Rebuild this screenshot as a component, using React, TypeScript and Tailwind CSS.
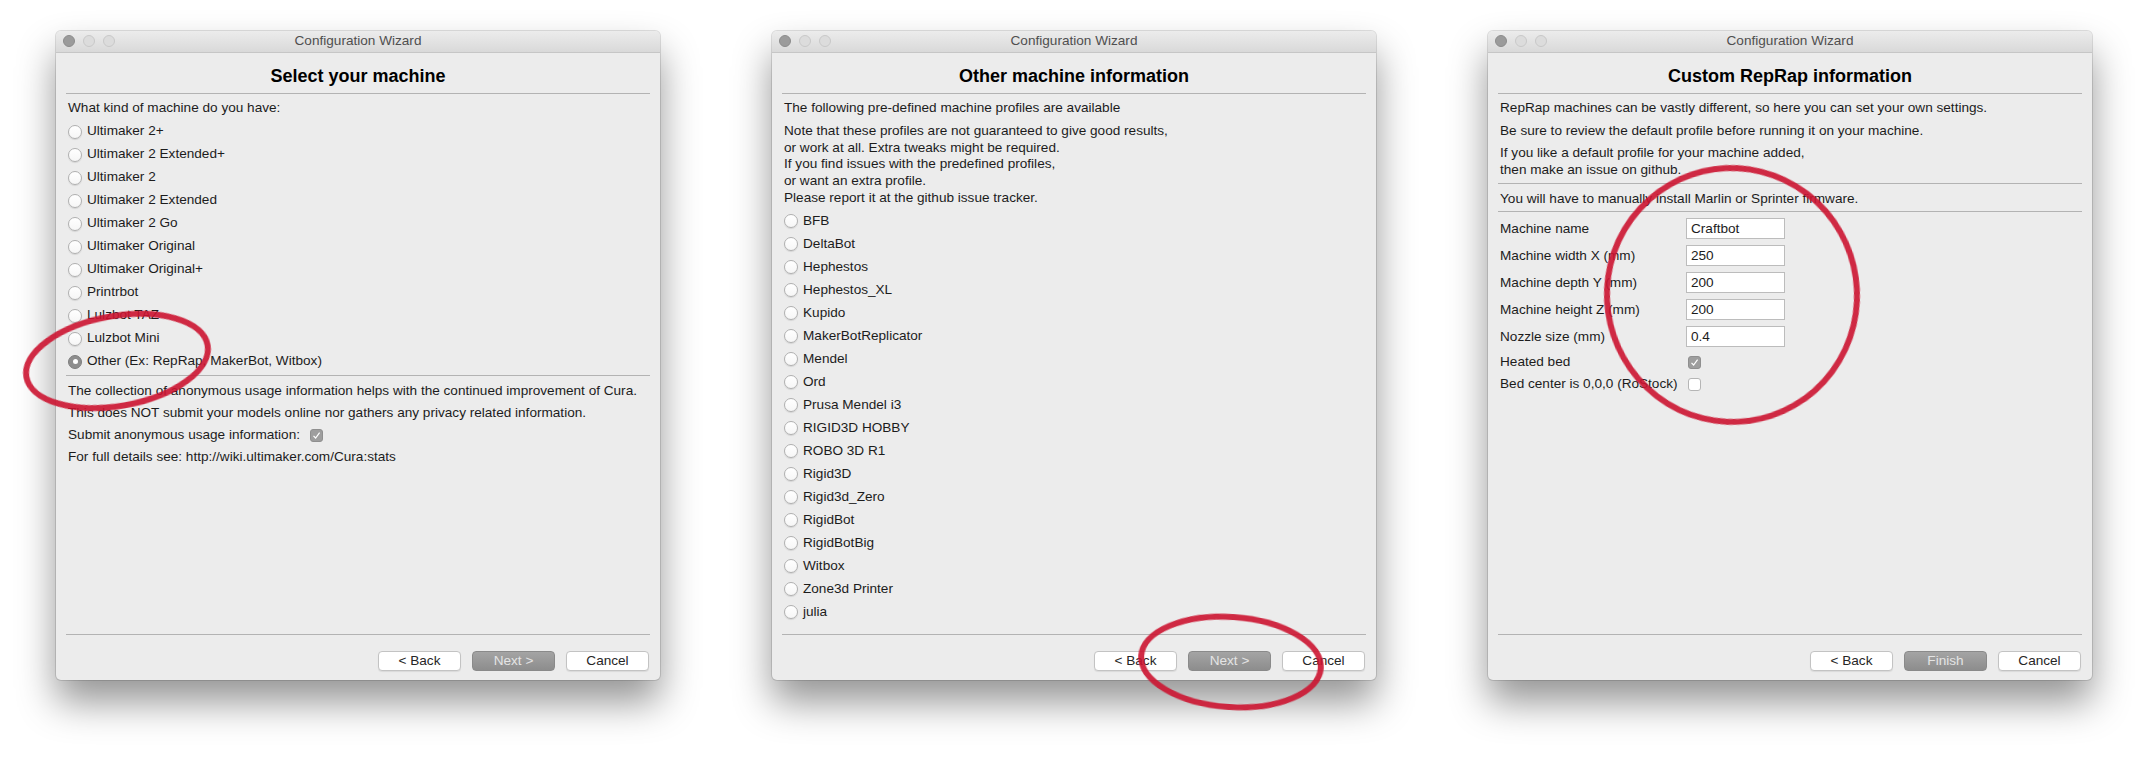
import React from "react";

const machines = [
  "Ultimaker 2+",
  "Ultimaker 2 Extended+",
  "Ultimaker 2",
  "Ultimaker 2 Extended",
  "Ultimaker 2 Go",
  "Ultimaker Original",
  "Ultimaker Original+",
  "Printrbot",
  "Lulzbot TAZ",
  "Lulzbot Mini",
  "Other (Ex: RepRap, MakerBot, Witbox)",
];

const profiles = [
  "BFB",
  "DeltaBot",
  "Hephestos",
  "Hephestos_XL",
  "Kupido",
  "MakerBotReplicator",
  "Mendel",
  "Ord",
  "Prusa Mendel i3",
  "RIGID3D HOBBY",
  "ROBO 3D R1",
  "Rigid3D",
  "Rigid3d_Zero",
  "RigidBot",
  "RigidBotBig",
  "Witbox",
  "Zone3d Printer",
  "julia",
];

const fields = [
  ["Machine name", "Craftbot"],
  ["Machine width X (mm)", "250"],
  ["Machine depth Y (mm)", "200"],
  ["Machine height Z (mm)", "200"],
  ["Nozzle size (mm)", "0.4"],
];

function Radio({ checked = false }: { checked?: boolean }) {
  if (checked) {
    return (
      <span className="w-[14px] h-[14px] rounded-full bg-[#8e8e8e] border border-[#7e7e7e] flex items-center justify-center flex-shrink-0">
        <span className="w-[5px] h-[5px] rounded-full bg-white" />
      </span>
    );
  }
  return (
    <span className="w-[14px] h-[14px] rounded-full bg-gradient-to-b from-white to-[#f6f6f6] border border-[#b0b0b0] shadow-[0_1px_1px_rgba(0,0,0,0.1)] flex-shrink-0" />
  );
}

function Checkbox({ checked = false }: { checked?: boolean }) {
  if (checked) {
    return (
      <span className="w-[13px] h-[13px] rounded-[3px] bg-[#9e9e9e] border border-[#8f8f8f] flex items-center justify-center flex-shrink-0">
        <svg width="9" height="9" viewBox="0 0 9 9">
          <path d="M1.5 4.8 L3.6 7 L7.6 1.6" fill="none" stroke="#fff" strokeWidth="1.2" />
        </svg>
      </span>
    );
  }
  return (
    <span className="w-[13px] h-[13px] rounded-[3px] bg-white border border-[#b5b5b5] flex-shrink-0" />
  );
}

function Separator() {
  return <div className="mx-[10px] h-px bg-[#b3b3b3]" />;
}

function Row({ children, h = "h-[23px]" }: { children: React.ReactNode; h?: string }) {
  return <div className={`${h} flex items-center px-[12px] whitespace-nowrap`}>{children}</div>;
}

function RadioRow({ label, checked = false }: { label: string; checked?: boolean }) {
  return (
    <div className="h-[23px] flex items-center gap-[5px] px-[12px]">
      <Radio checked={checked} />
      <span>{label}</span>
    </div>
  );
}

function Button({ label, primary = false }: { label: string; primary?: boolean }) {
  if (primary) {
    return (
      <div className="w-[83px] h-[20px] rounded-[4px] bg-gradient-to-b from-[#a4a4a4] to-[#8d8d8d] border border-[#8a8a8a] flex items-center justify-center text-[#e4e4e4]">
        {label}
      </div>
    );
  }
  return (
    <div className="w-[83px] h-[20px] rounded-[4px] bg-white border border-[#c3c3c3] shadow-[0_1px_1px_rgba(0,0,0,0.08)] flex items-center justify-center text-[#262626]">
      {label}
    </div>
  );
}

function Window({
  heading,
  finish = false,
  children,
}: {
  heading: string;
  finish?: boolean;
  children: React.ReactNode;
}) {
  return (
    <div className="w-[604px] h-[649px] flex flex-col bg-[#ececec] rounded-[5px] overflow-hidden shadow-[0_22px_38px_rgba(0,0,0,0.42),0_0_0_1px_rgba(0,0,0,0.12)]">
      {/* title bar */}
      <div className="h-[22px] relative flex items-center justify-center bg-gradient-to-b from-[#ececec] to-[#d9d9d9] border-b border-[#c6c6c6] flex-shrink-0">
        <div className="absolute left-[7px] top-[4px] flex gap-[8px]">
          <span className="w-[12px] h-[12px] rounded-full bg-[#9b9b9b] border border-[#8c8c8c]" />
          <span className="w-[12px] h-[12px] rounded-full bg-[#dcdcdc] border border-[#c8c8c8]" />
          <span className="w-[12px] h-[12px] rounded-full bg-[#dcdcdc] border border-[#c8c8c8]" />
        </div>
        <span className="text-[13.6px] text-[#4f4f4f]">Configuration Wizard</span>
      </div>

      <div className="pt-[12px] pb-[6px] flex justify-center">
        <h2 className="text-[18px] leading-[22px] font-bold text-black">{heading}</h2>
      </div>
      <Separator />

      <div className="flex-1 flex flex-col pt-[3px] text-[13.6px] text-[#1c1c1c]">{children}</div>

      {/* footer */}
      <Separator />
      <div className="pt-[16px] pb-[9px] pr-[11px] flex justify-end gap-[11px] text-[13.6px]">
        <Button label="< Back" />
        <Button label={finish ? "Finish" : "Next >"} primary />
        <Button label="Cancel" />
      </div>
    </div>
  );
}

export default function App() {
  return (
    <div className="relative w-full h-[760px] bg-white overflow-hidden font-['Liberation_Sans',Arial,sans-serif]">
      <div className="flex justify-center gap-[112px] pt-[31px]">
        {/* Select your machine */}
        <Window heading="Select your machine">
          <Row>What kind of machine do you have:</Row>
          {machines.map((m, i) => (
            <RadioRow key={m} label={m} checked={i === machines.length - 1} />
          ))}
          <div className="mt-[2px] mb-[4px]">
            <Separator />
          </div>
          <Row h="h-[22px]">The collection of anonymous usage information helps with the continued improvement of Cura.</Row>
          <Row h="h-[22px]">This does NOT submit your models online nor gathers any privacy related information.</Row>
          <Row h="h-[22px]">
            <span className="mr-[10px]">Submit anonymous usage information:</span>
            <Checkbox checked />
          </Row>
          <Row h="h-[22px]">For full details see: http://wiki.ultimaker.com/Cura:stats</Row>
        </Window>

        {/* Other machine information */}
        <Window heading="Other machine information">
          <Row>The following pre-defined machine profiles are available</Row>
          <div className="px-[12px] py-[3px] leading-[16.7px]">
            <p>Note that these profiles are not guaranteed to give good results,</p>
            <p>or work at all. Extra tweaks might be required.</p>
            <p>If you find issues with the predefined profiles,</p>
            <p>or want an extra profile.</p>
            <p>Please report it at the github issue tracker.</p>
          </div>
          {profiles.map((p) => (
            <RadioRow key={p} label={p} />
          ))}
        </Window>

        {/* Custom RepRap information */}
        <Window heading="Custom RepRap information" finish>
          <Row>RepRap machines can be vastly different, so here you can set your own settings.</Row>
          <Row>Be sure to review the default profile before running it on your machine.</Row>
          <div className="px-[12px] pt-[2px] pb-[3px] leading-[16.7px]">
            <p>If you like a default profile for your machine added,</p>
            <p>then make an issue on github.</p>
          </div>
          <div className="mt-[2px] mb-[3px]">
            <Separator />
          </div>
          <Row>You will have to manually install Marlin or Sprinter firmware.</Row>
          <div className="mt-[1px] mb-[6px]">
            <Separator />
          </div>
          {fields.map(([label, value]) => (
            <div key={label} className="h-[21px] mb-[6px] flex items-center px-[12px]">
              <span className="w-[186px]">{label}</span>
              <div className="w-[99px] h-[21px] bg-white border border-[#bcbcbc] flex items-center pl-[4px] text-[#1c1c1c]">
                {value}
              </div>
            </div>
          ))}
          <div className="h-[22px] mt-[-2px] flex items-center px-[12px]">
            <span className="w-[188px]">Heated bed</span>
            <Checkbox checked />
          </div>
          <div className="h-[22px] flex items-center px-[12px]">
            <span className="w-[188px] whitespace-nowrap">Bed center is 0,0,0 (RoStock)</span>
            <Checkbox />
          </div>
        </Window>
      </div>

      {/* red hand-drawn annotations */}
      <svg
        className="absolute left-0 top-0 pointer-events-none"
        width="2148"
        height="760"
        viewBox="0 0 2148 760"
      >
        <g fill="none" stroke="#cc1430" strokeWidth="6" strokeLinecap="round" opacity="0.9">
          <ellipse cx="117" cy="361" rx="92" ry="45" transform="rotate(-10 117 361)" />
          <ellipse cx="1231" cy="662" rx="90" ry="45" transform="rotate(4 1231 662)" />
          <ellipse cx="1732" cy="295" rx="125" ry="127" transform="rotate(-8 1732 295)" />
        </g>
      </svg>
    </div>
  );
}
